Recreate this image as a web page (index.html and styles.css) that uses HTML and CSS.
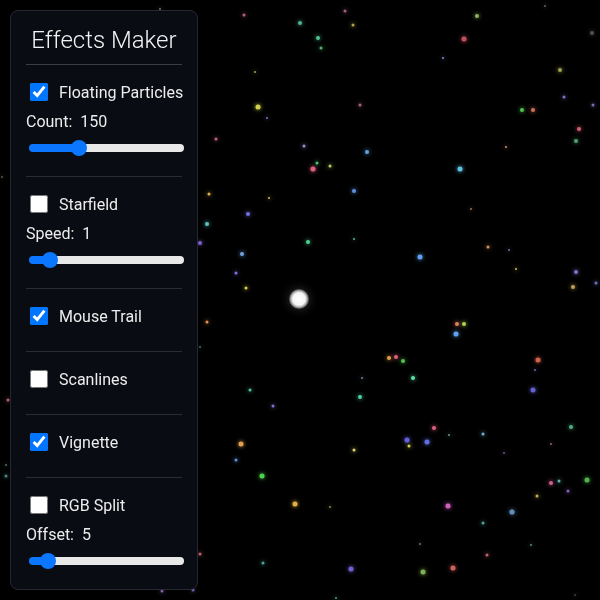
FILE: index.html
```html
<!DOCTYPE html>
<html lang="en">
<head>
    <meta charset="UTF-8">
    <meta name="viewport" content="width=device-width, initial-scale=1.0">
    <title>Effects Maker</title>
    <link rel="stylesheet" href="styles.css">
</head>
<body>
    <canvas id="scene" width="600" height="600"></canvas>

    <aside class="panel">
        <h1>Effects Maker</h1>

        <section class="effect">
            <label class="toggle"><input type="checkbox" checked> Floating Particles</label>
            <div class="value">Count: <span>150</span></div>
            <input type="range" min="0" max="500" value="150">
        </section>

        <section class="effect">
            <label class="toggle"><input type="checkbox"> Starfield</label>
            <div class="value">Speed: <span>1</span></div>
            <input type="range" min="0.1" max="10" step="0.1" value="1">
        </section>

        <section class="effect">
            <label class="toggle"><input type="checkbox" checked> Mouse Trail</label>
        </section>

        <section class="effect">
            <label class="toggle"><input type="checkbox"> Scanlines</label>
        </section>

        <section class="effect">
            <label class="toggle"><input type="checkbox" checked> Vignette</label>
        </section>

        <section class="effect">
            <label class="toggle"><input type="checkbox"> RGB Split</label>
            <div class="value">Offset: <span>5</span></div>
            <input type="range" min="1" max="50" value="5">
        </section>
    </aside>

    <script>
        // Particules : x, y, rayon, couleur
        const particles = [
            [244,15,1.5,'#b0607a'],[300,23,2,'#50b090'],[345,11,1.5,'#a06080'],[353,25,1.5,'#b0a050'],
            [318,38,2,'#50c090'],[321,48,1.5,'#50b070'],[255,72,1,'#b0a050'],[258,107,2.5,'#d0d050'],
            [267,118,1,'#8070c0'],[360,105,1.5,'#a06080'],[216,139,1.5,'#c06080'],[304,146,1.5,'#9090d0'],
            [367,152,2,'#60a0e0'],[313,169,2.5,'#e06080'],[317,163,1.5,'#50c070'],[330,166,1.5,'#b0d060'],
            [354,191,2,'#6090e0'],[209,194,1.5,'#e0b050'],[269,198,1,'#d0c050'],
            [477,16,2,'#90b060'],[464,39,2.5,'#c05060'],[443,58,1,'#8090d0'],[545,6,1,'#606060'],
            [592,33,2,'#505050'],[560,70,2,'#a0a050'],[564,97,1.5,'#8070c0'],[593,105,1.5,'#7070b0'],
            [522,110,2,'#50c050'],[533,110,2,'#d07060'],[579,129,2,'#d06070'],[576,141,2,'#50a070'],
            [506,147,1,'#d09070'],[460,169,2.5,'#60c0e0'],
            [248,214,2,'#7070e0'],[207,224,2,'#60c0c0'],[200,243,2,'#8060d0'],[242,254,2,'#70a0e0'],
            [236,273,1.5,'#8070e0'],[246,288,1.5,'#e0d050'],[308,242,2,'#50d090'],[354,239,1,'#60b0a0'],
            [207,322,1.5,'#e09050'],[389,358,2,'#e0a040'],[396,357,2,'#e06080'],[362,378,1,'#7080a0'],
            [250,390,1.5,'#50c0a0'],[360,397,2,'#50d0a0'],
            [471,209,1,'#a07050'],[488,247,1.5,'#d09060'],[509,250,1,'#7070b0'],[516,269,1,'#d0c060'],
            [420,257,2.5,'#60a0f0'],[576,272,2,'#8070d0'],[573,287,2,'#c0a050'],[596,283,1.5,'#7070c0'],
            [457,324,2,'#e08060'],[464,324,2,'#b0d050'],[456,334,2.5,'#60a0f0'],[403,361,2,'#50c050'],
            [413,378,2,'#60e0a0'],[538,360,2.5,'#d06050'],[535,370,1,'#7060c0'],[533,390,2.5,'#6060d0'],
            [273,406,1.5,'#8070d0'],[241,444,2.5,'#e0a050'],[236,460,1.5,'#6090e0'],[262,476,2.5,'#50d050'],
            [354,450,1.5,'#e0d070'],[295,504,2.5,'#e0b040'],[330,507,1,'#909050'],[200,554,1.5,'#c06070'],
            [263,563,1.5,'#50a0a0'],[351,569,2.5,'#7060d0'],[336,598,1,'#50a070'],
            [434,428,2,'#e06080'],[407,440,2.5,'#6060e0'],[409,446,1.5,'#d0d050'],[427,442,2.5,'#6070e0'],
            [449,435,1,'#60a080'],[483,434,1.5,'#70b0d0'],[571,427,2,'#50b080'],[551,444,1,'#906070'],
            [504,453,1,'#705090'],[551,483,2,'#d06090'],[559,481,1.5,'#60b0b0'],[587,480,2.5,'#50b050'],
            [568,491,1.5,'#8060b0'],[537,496,1.5,'#c0b050'],[448,506,2.5,'#d060c0'],[512,512,2.5,'#6090c0'],
            [483,523,1.5,'#50a090'],[420,544,1,'#707060'],[531,545,1,'#509070'],[487,555,1.5,'#c06070'],
            [453,568,2.5,'#d06060'],[423,572,2.5,'#80b050'],[575,595,1,'#404040'],
            [8,400,1.5,'#b06070'],[6,465,1,'#507070'],[6,476,1.5,'#508080'],[160,9,1,'#707070'],
            [2,177,1,'#605040'],[162,591,1.5,'#8060a0'],[193,590,1.5,'#7060b0'],[200,347,1,'#407060']
        ];

        const canvas = document.getElementById('scene');
        const ctx = canvas.getContext('2d');
        ctx.fillStyle = '#000';
        ctx.fillRect(0, 0, canvas.width, canvas.height);

        particles.forEach(([x, y, r, color]) => {
            ctx.shadowColor = color;
            ctx.shadowBlur = 4;
            ctx.fillStyle = color;
            ctx.beginPath();
            ctx.arc(x, y, r, 0, Math.PI * 2);
            ctx.fill();
        });

        // Traînée de la souris
        ctx.shadowColor = '#ffffff';
        ctx.shadowBlur = 10;
        const glow = ctx.createRadialGradient(299, 299, 0, 299, 299, 10);
        glow.addColorStop(0, '#ffffff');
        glow.addColorStop(0.6, '#f6f6f6');
        glow.addColorStop(1, 'rgba(230,230,230,0.2)');
        ctx.fillStyle = glow;
        ctx.beginPath();
        ctx.arc(299, 299, 10, 0, Math.PI * 2);
        ctx.fill();

        // Remplissage bleu des curseurs
        document.querySelectorAll('input[type="range"]').forEach(slider => {
            const f = (slider.value - slider.min) / (slider.max - slider.min);
            slider.style.setProperty('--fill', `calc(8px + ${f} * (100% - 16px))`);
        });
    </script>
</body>
</html>
```

FILE: styles.css
```css
body {
    margin: 0;
    background-color: #000;
    font-family: Roboto, "Liberation Sans", sans-serif;
    color: #ececec;
    overflow: hidden;
}
#scene {
    display: block;
}
.panel {
    position: fixed;
    top: 10px;
    left: 10px;
    width: 156px;
    padding: 15px 15px 0;
    background-color: rgba(11, 13, 20, 0.95);
    border: 1px solid #25282f;
    border-radius: 8px;
}
.panel h1 {
    margin: 0;
    padding-bottom: 10px;
    font-size: 24px;
    font-weight: 300;
    text-align: center;
    color: #f2f2f2;
    border-bottom: 1px solid #3a3d45;
}
.effect {
    padding: 15px 0 20px;
    border-bottom: 1px solid #2a2d35;
}
.effect:last-child {
    border-bottom: none;
}
.toggle {
    display: flex;
    align-items: center;
    height: 24px;
    margin-bottom: 3px;
    font-size: 16px;
    white-space: nowrap;
    cursor: pointer;
}
.toggle input {
    width: 18px;
    height: 18px;
    margin: 0 11px 0 4px;
    flex-shrink: 0;
}
.value {
    padding-top: 3px;
    height: 23px;
    line-height: 24px;
    font-size: 16px;
}
.value span {
    margin-left: 4px;
}
input[type="range"] {
    -webkit-appearance: none;
    appearance: none;
    display: block;
    width: 155px;
    height: 16px;
    margin: 7px 0 0 3px;
    background: transparent;
    cursor: pointer;
}
input[type="range"]::-webkit-slider-runnable-track {
    height: 8px;
    border-radius: 4px;
    background: linear-gradient(to right, #0b76ff var(--fill, 0), #e8e8e8 var(--fill, 0));
}
input[type="range"]::-webkit-slider-thumb {
    -webkit-appearance: none;
    width: 16px;
    height: 16px;
    margin-top: -4px;
    border-radius: 50%;
    background: #0b76ff;
    border: none;
}
```
